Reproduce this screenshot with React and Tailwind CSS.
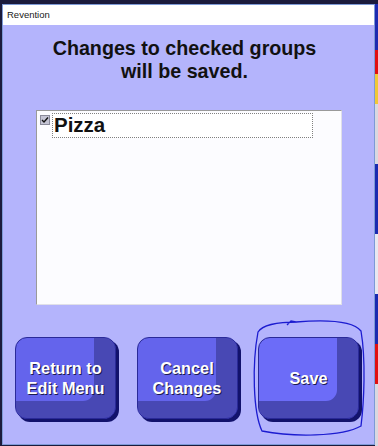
import React from 'react';

const buttons = [
  { label: ['Return to', 'Edit Menu'], face: 'bg-[#6464ec]' },
  { label: ['Cancel', 'Changes'], face: 'bg-[#6464ec]' },
  { label: ['Save'], face: 'bg-[#6c6cf8]' },
];

const App = () => {
  return (
    <div className="relative w-[378px] h-[446px] bg-[#1b1b3c] flex overflow-hidden font-['Liberation_Sans',Arial,sans-serif]">
      {/* Dialog window */}
      <div className="ml-[2px] mt-[4px] w-[373px] h-[441px] border border-[#7d9ad6] flex flex-col">
        <div className="h-[20px] bg-white flex items-center pl-[4px] text-[9.5px] text-[#202020]">
          Revention
        </div>

        <div className="flex-1 bg-[#b4b4fc] flex flex-col">
          <h2 className="mt-[12px] pr-[8px] text-center font-bold text-[19.7px] leading-[23px] text-[#111]">
            Changes to checked groups
            <br />
            will be saved.
          </h2>

          {/* Group list */}
          <div className="mt-[27px] ml-[33px] w-[306px] h-[195px] bg-[#fcfcff] border border-t-[#9a9a9a] border-l-[#9a9a9a] border-r-[#e0e0e8] border-b-[#e0e0e8]">
            <div className="flex items-start pl-[3px] pt-[2px]">
              <div className="mt-[2px] w-[10px] h-[10px] bg-[#c4c4d4] border border-[#8a8a9a] flex items-center justify-center">
                <svg width="8" height="8" viewBox="0 0 8 8">
                  <path d="M1 4 L3 6 L7 1.5" fill="none" stroke="#111" strokeWidth="1.4" />
                </svg>
              </div>
              <div className="ml-[2px] w-[261px] h-[25px] border border-dotted border-[#808080] bg-white flex items-center pl-[1px] font-bold text-[20.5px] text-[#111]">
                Pizza
              </div>
            </div>
          </div>

          {/* Action buttons */}
          <div className="mt-[32px] ml-[12px] flex gap-[20.5px]">
            {buttons.map((b) => (
              <button
                key={b.label.join(' ')}
                className={`w-[101px] h-[82px] rounded-[12px] border border-[#2a2a98] ${b.face} shadow-[inset_-21px_-17px_0_#4848b4,3px_3px_0_#12126c] flex flex-col items-center justify-center text-white font-bold text-[16.3px] leading-[20px] [text-shadow:1px_1px_0_#1a1a50]`}
              >
                {b.label.map((l) => (
                  <span key={l}>{l}</span>
                ))}
              </button>
            ))}
          </div>
        </div>
      </div>

      {/* Background app peeking at the right */}
      <div className="mt-[4px] w-[3px] flex flex-col">
        <div className="h-[46px] bg-[#1d2bb0]" />
        <div className="h-[24px] bg-[#e01010]" />
        <div className="h-[30px] bg-[#f0c838]" />
        <div className="h-[60px] bg-[#d8d8e0]" />
        <div className="h-[70px] bg-[#1a2ab0]" />
        <div className="h-[60px] bg-[#e8e8f0]" />
        <div className="h-[50px] bg-[#1a2ab0]" />
        <div className="h-[40px] bg-[#e01010]" />
        <div className="flex-1 bg-[#d8d8e0]" />
      </div>

      {/* Hand-drawn mark around Save */}
      <svg className="absolute left-0 top-0 pointer-events-none" width="378" height="446" viewBox="0 0 378 446">
        <path
          d="M287 325 L291 321 L296 322 C320 320 352 320 361 331 C366 360 364 402 361 426 C342 437 292 437 262 431 C253 412 252 364 258 332 C263 324 280 322 298 322"
          fill="none"
          stroke="#1c1cd0"
          strokeWidth="1.3"
        />
      </svg>
    </div>
  );
};

export default App;
